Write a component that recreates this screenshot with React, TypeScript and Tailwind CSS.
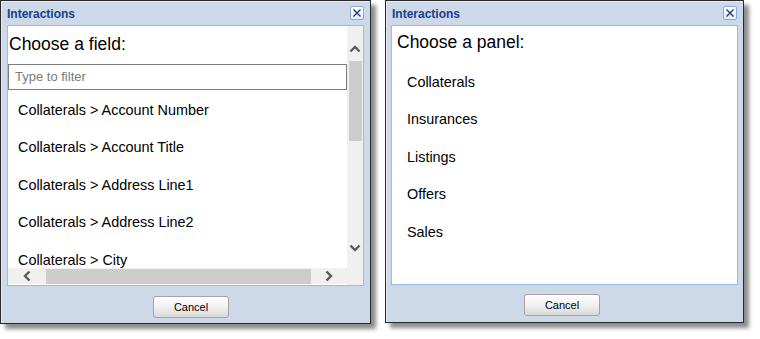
import React from "react";

const F = "font-['Liberation_Sans',Arial,sans-serif]";

function ChevUp() {
  return (
    <svg width="12" height="8" viewBox="0 0 12 8">
      <path d="M1.5 6.5 L6 2 L10.5 6.5" fill="none" stroke="#5a5a5a" strokeWidth="2.4" />
    </svg>
  );
}
function ChevDown() {
  return (
    <svg width="12" height="8" viewBox="0 0 12 8">
      <path d="M1.5 1.5 L6 6 L10.5 1.5" fill="none" stroke="#5a5a5a" strokeWidth="2.4" />
    </svg>
  );
}
function ChevLeft() {
  return (
    <svg width="8" height="12" viewBox="0 0 8 12">
      <path d="M6.5 1.5 L2 6 L6.5 10.5" fill="none" stroke="#5a5a5a" strokeWidth="2.4" />
    </svg>
  );
}
function ChevRight() {
  return (
    <svg width="8" height="12" viewBox="0 0 8 12">
      <path d="M1.5 1.5 L6 6 L1.5 10.5" fill="none" stroke="#5a5a5a" strokeWidth="2.4" />
    </svg>
  );
}

function CloseBtn() {
  return (
    <div className="w-[14px] h-[14px] rounded-[2px] border border-[#8eaad0] bg-gradient-to-b from-white to-[#e4ecf7] flex items-center justify-center">
      <svg width="10" height="10" viewBox="0 0 10 10">
        <path d="M1.5 1.5 L8.5 8.5 M8.5 1.5 L1.5 8.5" stroke="#1e3f7a" strokeWidth="1.4" />
      </svg>
    </div>
  );
}

function TitleBar() {
  return (
    <div className="h-[24px] flex items-center justify-between pl-[6px] pr-[6px]">
      <span className={`${F} text-[12px] font-bold text-[#15428b] pt-[1px]`}>Interactions</span>
      <CloseBtn />
    </div>
  );
}

function CancelBtn() {
  return (
    <div className={`${F} w-[76px] h-[22px] rounded-[3px] border border-[#a3a3a3] bg-gradient-to-b from-[#fefefe] via-[#f1f1f1] to-[#d9d9d9] flex items-center justify-center text-[11px] text-black`}>
      Cancel
    </div>
  );
}

const fields = [
  "Collaterals > Account Number",
  "Collaterals > Account Title",
  "Collaterals > Address Line1",
  "Collaterals > Address Line2",
  "Collaterals > City",
];

const panels = ["Collaterals", "Insurances", "Listings", "Offers", "Sales"];

export default function App() {
  return (
    <div className="w-[760px] h-[339px] bg-white flex items-start">
      {/* Left window */}
      <div className="w-[371px] h-[324px] bg-[#cdd9e8] border border-[#2a2a2a] shadow-[inset_1px_1px_0_#e3ebf5,5px_5px_4px_rgba(0,0,0,0.45)] flex flex-col">
        <TitleBar />
        <div className="mx-[6px] h-[261px] border border-[#99bbe8] bg-white flex">
          <div className="w-[339px] flex flex-col">
            <div className="h-[38px] pt-[7px] pl-[1px]">
              <div className={`${F} text-[17.5px] leading-[22px] text-black`}>Choose a field:</div>
            </div>
            <div className="h-[26px] border border-[#7d7d7d] flex items-center pl-[6px]">
              <span className={`${F} text-[13px] text-[#7a7a7a]`}>Type to filter</span>
            </div>
            <div className="h-[178px] overflow-hidden pt-[2px]">
              {fields.map((f) => (
                <div key={f} className={`${F} h-[37.5px] flex items-center pl-[10px] text-[14.4px] text-black whitespace-nowrap`}>
                  {f}
                </div>
              ))}
            </div>
            <div className="h-[16px] bg-[#f0f0f0] flex items-center">
              <div className="w-[38px] flex justify-center">
                <ChevLeft />
              </div>
              <div className="w-[265px] h-[15px] bg-[#cdcdcd]" />
              <div className="flex-1 flex justify-center">
                <ChevRight />
              </div>
            </div>
          </div>
          <div className="flex-1 bg-[#f0f0f0] flex flex-col items-center">
            <div className="h-[35px] w-full flex items-end justify-center pb-[8px]">
              <ChevUp />
            </div>
            <div className="h-[80px] w-[13px] bg-[#cdcdcd]" />
            <div className="flex-1" />
            <div className="h-[41px] w-full flex items-start justify-center">
              <ChevDown />
            </div>
          </div>
        </div>
        <div className="flex-1 flex items-start pt-[10px] pl-[152px]">
          <CancelBtn />
        </div>
      </div>

      {/* Right window */}
      <div className="ml-[14px] w-[359px] h-[323px] bg-[#cdd9e8] border border-[#2a2a2a] shadow-[inset_1px_1px_0_#e3ebf5,5px_5px_4px_rgba(0,0,0,0.45)] flex flex-col">
        <TitleBar />
        <div className="mx-[5px] h-[260px] border border-[#99bbe8] bg-white flex flex-col">
          <div className="h-[37px] pt-[5px] pl-[5px]">
            <div className={`${F} text-[17.5px] leading-[22px] text-black`}>Choose a panel:</div>
          </div>
          <div className="pt-[1px]">
            {panels.map((p) => (
              <div key={p} className={`${F} h-[37.5px] flex items-center pl-[15px] text-[14.4px] text-black`}>
                {p}
              </div>
            ))}
          </div>
        </div>
        <div className="flex-1 flex items-start pt-[9px] pl-[138px]">
          <CancelBtn />
        </div>
      </div>
    </div>
  );
}
